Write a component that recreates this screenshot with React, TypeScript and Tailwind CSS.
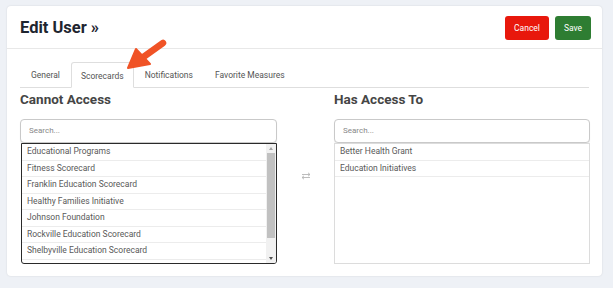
import React from 'react';

const cannotAccess = [
  'Educational Programs',
  'Fitness Scorecard',
  'Franklin Education Scorecard',
  'Healthy Families Initiative',
  'Johnson Foundation',
  'Rockville Education Scorecard',
  'Shelbyville Education Scorecard',
  'Springfield Education Scorecard',
];

const hasAccess = ['Better Health Grant', 'Education Initiatives'];

const tabs = ['General', 'Scorecards', 'Notifications', 'Favorite Measures'];

const SearchBox = () => (
  <div className="flex h-[24px] items-center rounded-[4px] border border-[#c9c9c9] bg-white px-[8px] text-[8px] text-[#888] shadow-[0_1px_1px_rgba(0,0,0,0.08)]">
    Search...
  </div>
);

const ListItem = ({ label }: { label: string }) => (
  <div className="flex h-[16.5px] shrink-0 items-center border-b border-[#ececec] pl-[5px] text-[8.5px] text-[#595959]">
    {label}
  </div>
);

const Scrollbar = () => (
  <div className="flex w-[10px] shrink-0 flex-col bg-[#f1f1f1]">
    <div className="flex h-[9px] items-center justify-center">
      <div className="h-0 w-0 border-x-[2.5px] border-b-[3px] border-x-transparent border-b-[#a3a3a3]" />
    </div>
    <div className="mx-[1px] h-[85px] bg-[#c1c1c1]" />
    <div className="flex-1" />
    <div className="flex h-[9px] items-center justify-center">
      <div className="h-0 w-0 border-x-[2.5px] border-t-[3px] border-x-transparent border-t-[#505050]" />
    </div>
  </div>
);

const SwapIcon = () => (
  <svg width="10" height="8" viewBox="0 0 10 8" fill="none" stroke="#b5b5b5" strokeWidth="0.9">
    <path d="M1 2.5h8M7 0.8l2 1.7-2 1.7" />
    <path d="M9 5.5H1M3 3.8L1 5.5l2 1.7" />
  </svg>
);

const PointerArrow = () => (
  <svg
    className="pointer-events-none absolute left-[122px] top-[36px]"
    width="48"
    height="38"
    viewBox="0 0 48 38"
  >
    <path d="M41 7 L20 22" stroke="#f05326" strokeWidth="6.5" strokeLinecap="round" />
    <path d="M6 32 L14 13 L28 28 Z" fill="#f05326" stroke="#f05326" strokeWidth="2" strokeLinejoin="round" />
  </svg>
);

export default function App() {
  return (
    <div className="relative h-[288px] w-[613px] bg-[#eef1f6] pl-[7px] pt-[6px] font-['Roboto',sans-serif]">
      <div className="flex h-[270px] w-[595px] flex-col rounded-[4px] bg-white shadow-[0_0_2px_rgba(0,0,0,0.12)]">
        <div className="flex h-[43px] items-center justify-between border-b border-[#e8e8e8] pl-[13px] pr-[11px] pt-[2px]">
          <h1 className="text-[16.5px] font-bold text-[#1e2530]">Edit User »</h1>
          <div className="flex gap-[6px]">
            <button className="h-[24px] w-[44px] rounded-[3px] bg-[#e8180c] text-[8.5px] text-white">Cancel</button>
            <button className="h-[24px] w-[36px] rounded-[3px] bg-[#2e7d32] text-[8.5px] text-white">Save</button>
          </div>
        </div>

        <div className="flex flex-1 flex-col px-[13px] pt-[13px]">
          <div className="flex h-[26px] border-b border-[#dedede]">
            {tabs.map((t) => (
              <div
                key={t}
                className={
                  t === 'Scorecards'
                    ? 'mb-[-1px] flex items-center rounded-t-[3px] border border-b-white border-[#dedede] bg-white px-[9px] pt-[2px] text-[8.5px] text-[#555]'
                    : 'flex items-center border border-transparent px-[10px] pt-[2px] text-[8.5px] text-[#555]'
                }
              >
                {t}
              </div>
            ))}
          </div>

          <div className="grid grid-cols-[257px_57px_256px] pt-[3px]">
            <div className="flex flex-col">
              <h2 className="h-[17px] text-[13.5px] font-bold leading-[17px] text-[#454545]">Cannot Access</h2>
              <div className="mt-[11px]">
                <SearchBox />
              </div>
              <div className="ml-[1px] flex h-[121px] overflow-hidden rounded-b-[3px] border-[1.5px] border-[#2a2a2a] bg-white">
                <div className="flex flex-1 flex-col overflow-hidden">
                  {cannotAccess.map((i) => (
                    <ListItem key={i} label={i} />
                  ))}
                </div>
                <Scrollbar />
              </div>
            </div>

            <div className="flex items-start justify-center pt-[81px]">
              <SwapIcon />
            </div>

            <div className="flex flex-col">
              <h2 className="h-[17px] text-[13.5px] font-bold leading-[17px] text-[#454545]">Has Access To</h2>
              <div className="mt-[11px]">
                <SearchBox />
              </div>
              <div className="flex h-[121px] flex-col overflow-hidden border border-[#dcdcdc] bg-white">
                {hasAccess.map((i) => (
                  <ListItem key={i} label={i} />
                ))}
              </div>
            </div>
          </div>
        </div>
      </div>
      <PointerArrow />
    </div>
  );
}
